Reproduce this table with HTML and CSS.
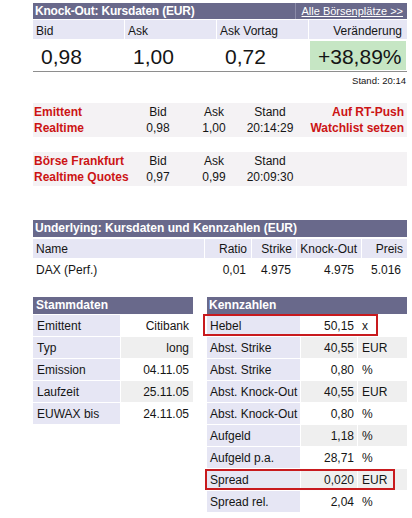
FILE: index.html
```html
<!DOCTYPE html>
<html lang="de">
<head>
<meta charset="utf-8">
<title>Knock-Out Kursdaten</title>
<link rel="stylesheet" href="styles.css">
</head>
<body>
<div class="page">
  <section class="ko">
    <div class="bar">
      <span class="bar-title">Knock-Out: Kursdaten (EUR)</span>
      <a class="bar-link" href="#">Alle Börsenplätze &gt;&gt;</a>
    </div>
    <div class="ko-grid ko-labels">
      <span>Bid</span><span>Ask</span><span>Ask Vortag</span><span class="r">Veränderung</span>
    </div>
    <div class="ko-grid ko-values">
      <span>0,98</span><span>1,00</span><span>0,72</span><span class="chg">+38,89%</span>
    </div>
    <div class="stand">Stand: 20:14</div>
  </section>

  <section class="rt">
    <span class="red">Emittent</span><span class="c">Bid</span><span class="c">Ask</span><span class="c">Stand</span><span class="red r">Auf RT-Push</span>
    <span class="red">Realtime</span><span class="c">0,98</span><span class="c">1,00</span><span class="c">20:14:29</span><span class="red r">Watchlist setzen</span>
  </section>

  <section class="rt rt2">
    <span class="red">Börse Frankfurt</span><span class="c">Bid</span><span class="c">Ask</span><span class="c">Stand</span><span class="r"></span>
    <span class="red">Realtime Quotes</span><span class="c">0,97</span><span class="c">0,99</span><span class="c">20:09:30</span><span class="r"></span>
  </section>

  <section class="ul">
    <div class="bar"><span class="bar-title">Underlying: Kursdaten und Kennzahlen (EUR)</span></div>
    <div class="ul-grid ul-labels">
      <span>Name</span><span class="r">Ratio</span><span class="r">Strike</span><span class="r">Knock-Out</span><span class="r">Preis</span>
    </div>
    <div class="ul-grid ul-values">
      <span>DAX (Perf.)</span><span class="r">0,01</span><span class="r">4.975</span><span class="r ko-val">4.975</span><span class="r preis-val">5.016</span>
    </div>
  </section>

  <div class="pair">
    <section class="tbl stamm">
      <div class="bar"><span class="bar-title">Stammdaten</span></div>
      <div class="srow"><span class="lbl">Emittent</span><span class="val">Citibank</span></div>
      <div class="srow alt"><span class="lbl">Typ</span><span class="val">long</span></div>
      <div class="srow"><span class="lbl">Emission</span><span class="val">04.11.05</span></div>
      <div class="srow alt"><span class="lbl">Laufzeit</span><span class="val">25.11.05</span></div>
      <div class="srow"><span class="lbl">EUWAX bis</span><span class="val">24.11.05</span></div>
    </section>

    <section class="tbl kenn">
      <div class="bar"><span class="bar-title">Kennzahlen</span></div>
      <div class="krow"><span class="lbl">Hebel</span><span class="val">50,15</span><span class="unit">x</span></div>
      <div class="krow alt"><span class="lbl">Abst. Strike</span><span class="val">40,55</span><span class="unit">EUR</span></div>
      <div class="krow"><span class="lbl">Abst. Strike</span><span class="val">0,80</span><span class="unit">%</span></div>
      <div class="krow alt"><span class="lbl">Abst. Knock-Out</span><span class="val">40,55</span><span class="unit">EUR</span></div>
      <div class="krow"><span class="lbl">Abst. Knock-Out</span><span class="val">0,80</span><span class="unit">%</span></div>
      <div class="krow alt"><span class="lbl">Aufgeld</span><span class="val">1,18</span><span class="unit">%</span></div>
      <div class="krow"><span class="lbl">Aufgeld p.a.</span><span class="val">28,71</span><span class="unit">%</span></div>
      <div class="krow alt"><span class="lbl">Spread</span><span class="val">0,020</span><span class="unit">EUR</span></div>
      <div class="krow"><span class="lbl">Spread rel.</span><span class="val">2,04</span><span class="unit">%</span></div>
      <div class="mark mark-hebel"></div>
      <div class="mark mark-spread"></div>
    </section>
  </div>
</div>
</body>
</html>
```

FILE: styles.css
```css
* { box-sizing: border-box; }

html, body {
  margin: 0;
  padding: 0;
  background: #ffffff;
}

body {
  font-family: "Liberation Sans", Arial, sans-serif;
  font-size: 12px;
  color: #151515;
}

.page {
  width: 412px;
  padding: 3px 5px 0 33px;
}

/* header bars */
.bar {
  display: flex;
  justify-content: space-between;
  align-items: stretch;
  height: 17px;
  background: #69698b;
  color: #ffffff;
}

.bar-title {
  font-weight: bold;
  font-size: 12px;
  line-height: 17px;
  padding-left: 2px;
  white-space: nowrap;
}

.bar-link {
  color: #ffffff;
  font-size: 11px;
  line-height: 16px;
  text-decoration: underline;
  padding: 0 4px 0 5px;
  border-left: 1px solid #8b8ba8;
  white-space: nowrap;
}

.r { text-align: right; }
.c { text-align: center; }

/* Knock-Out block */
.ko .bar { height: 16px; }
.ko .bar-title { line-height: 16px; letter-spacing: -0.2px; }

.ko-grid {
  display: grid;
  grid-template-columns: 91px 91px 91px 1fr;
  column-gap: 1px;
}

.ko-labels {
  margin-top: 1px;
  height: 19px;
}

.ko-labels span {
  background: #e6e6f4;
  line-height: 15px;
  padding: 4px 0 0 3px;
}

.ko-labels span.r { padding-right: 5px; }

.ko-values {
  padding: 2px 0 1px;
  border-bottom: 1px solid #8e8e8e;
}

.ko-values span {
  height: 29px;
  font-size: 21px;
  line-height: 26px;
  padding: 3px 0 0 8px;
}

.ko-values span.chg {
  background: #c6e6c4;
  text-align: right;
  padding-right: 4px;
  margin: 0 2px 0 1px;
}

.stand {
  text-align: right;
  font-size: 9.5px;
  line-height: 12px;
  padding: 3px 1px 0 0;
}

/* realtime blocks */
.rt {
  display: grid;
  grid-template-columns: 97px 56px 56px 56px 1fr;
  margin-top: 16px;
  padding: 1px 0 1px;
  background: #f4f2f4;
  line-height: 16px;
}

.rt2 { margin-top: 15px; }

.rt span.r { padding-right: 3px; }

.red {
  color: #cc1414;
  font-weight: bold;
  padding-left: 1px;
  white-space: nowrap;
}

/* underlying */
.ul { margin-top: 34px; }

.ul-grid {
  display: grid;
  grid-template-columns: 171px 46px 44px 64px 1fr;
  column-gap: 1px;
}

.ul-labels {
  margin-top: 2px;
  height: 19px;
}

.ul-labels span {
  background: #e6e6f4;
  line-height: 18px;
  padding: 1px 4px 0 3px;
}

.ul-labels span.r { padding-right: 4px; }

.ul-values span {
  height: 22px;
  line-height: 20px;
  padding: 2px 5px 0 3px;
}

.ul-values span.ko-val { padding-right: 7px; }
.ul-values span.preis-val { padding-right: 6px; }

/* Stammdaten / Kennzahlen */
.pair {
  display: flex;
  gap: 14px;
  margin-top: 17px;
}

.tbl {
  display: flex;
  flex-direction: column;
  gap: 1px;
}

.stamm { width: 160px; }

.kenn {
  width: 200px;
  position: relative;
}

.tbl .bar-title { padding-left: 3px; }
.kenn .bar-title { padding-left: 2px; }

.srow, .krow {
  display: grid;
  column-gap: 1px;
  height: 21px;
}

.srow { grid-template-columns: 87px 1fr; }
.krow { grid-template-columns: 93px 56px 1fr; }

.srow span, .krow span {
  line-height: 20px;
  padding-top: 1px;
  white-space: nowrap;
}

.lbl {
  background: #e6e6f4;
  padding-left: 3px;
}

.stamm .lbl { padding-left: 4px; }

.val {
  text-align: right;
  padding-right: 3px;
  background: #ffffff;
}

.stamm .val { padding-right: 4px; }

.unit {
  padding-left: 4px;
  background: #ffffff;
}

.alt .val, .alt .unit { background: #efefef; }

.krow:nth-child(odd) .val, .krow:nth-child(odd) .unit { }

/* red highlight frames */
.mark {
  position: absolute;
  border: 2px solid #c81a1e;
}

.mark-hebel {
  left: -4px;
  top: 17px;
  width: 175px;
  height: 22px;
}

.mark-spread {
  left: -2px;
  top: 172px;
  width: 190px;
  height: 21px;
}
```
